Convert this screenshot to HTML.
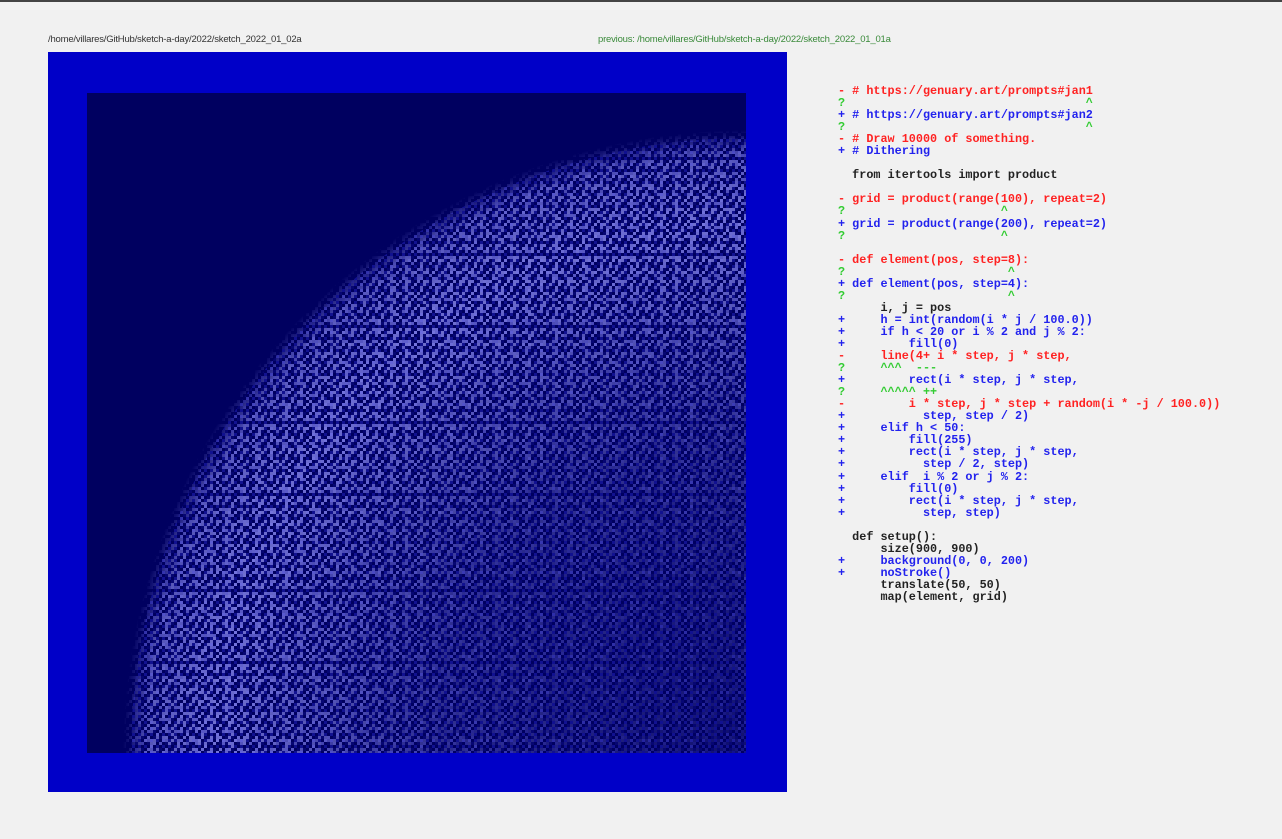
<!DOCTYPE html>
<html><head><style>
html,body{margin:0;padding:0;}
body{width:1282px;height:839px;background:#f1f1f1;position:relative;overflow:hidden;font-family:"Liberation Sans",sans-serif;}
#top{position:absolute;left:0;top:0;width:1282px;height:2px;background:#444;}
.h{position:absolute;top:34px;font-size:9.5px;color:#333;letter-spacing:-0.2px;}
pre{position:absolute;left:838px;top:85px;margin:0;font-family:"Liberation Mono",monospace;font-weight:bold;font-size:11.8px;line-height:12.05px;color:#222;}
.r{color:#f22}.b{color:#22e}.g{color:#3c3}
</style></head><body>
<div id="top"></div>
<div class="h" style="left:48px">/home/villares/GitHub/sketch-a-day/2022/sketch_2022_01_02a</div>
<div class="h" style="left:598px;color:#3a8a3a">previous: /home/villares/GitHub/sketch-a-day/2022/sketch_2022_01_01a</div>
<svg style="position:absolute;left:48px;top:52px" width="739" height="740">
<defs>
<pattern id="p1" width="9" height="12" patternUnits="userSpaceOnUse">
<rect x="0" y="0" width="3" height="3" fill="#9a9aff"/>
<rect x="3" y="6" width="3" height="3" fill="#8080f0"/>
<rect x="6" y="3" width="3" height="3" fill="#a0a0ff"/>
</pattern>
<pattern id="p2" width="15" height="21" patternUnits="userSpaceOnUse">
<rect x="3" y="9" width="3" height="3" fill="#9a9aff"/>
<rect x="9" y="15" width="6" height="3" fill="#8888f8"/>
<rect x="12" y="3" width="3" height="6" fill="#9090ff"/>
<rect x="0" y="18" width="3" height="3" fill="#a0a0ff"/>
</pattern>
<pattern id="p3" width="27" height="24" patternUnits="userSpaceOnUse">
<rect x="6" y="12" width="3" height="3" fill="#9a9aff"/>
<rect x="18" y="6" width="6" height="3" fill="#8080f0"/>
<rect x="21" y="18" width="3" height="6" fill="#9a9aff"/>
</pattern>
<pattern id="q" width="6" height="6" patternUnits="userSpaceOnUse">
<rect x="0" y="3" width="3" height="3" fill="#1c1cb0"/>
<rect x="3" y="0" width="3" height="3" fill="#0a0a80"/>
</pattern>
<radialGradient id="m" cx="698" cy="701" r="623" gradientUnits="userSpaceOnUse">
<stop offset="0" stop-color="#fff" stop-opacity="0.1"/>
<stop offset="0.5" stop-color="#fff" stop-opacity="0.3"/>
<stop offset="0.85" stop-color="#fff" stop-opacity="0.7"/>
<stop offset="0.96" stop-color="#fff" stop-opacity="0.55"/>
<stop offset="1" stop-color="#fff" stop-opacity="0"/>
</radialGradient>
<mask id="mk"><rect x="0" y="0" width="739" height="740" fill="url(#m)"/></mask>
<clipPath id="c"><rect x="39" y="41" width="659" height="660"/></clipPath>
</defs>
<rect width="739" height="740" fill="#0000c8"/>
<rect x="39" y="41" width="659" height="660" fill="#000060"/>
<g clip-path="url(#c)">
<circle cx="698" cy="701" r="615" fill="url(#q)" opacity="0.6"/>
<g mask="url(#mk)">
<rect width="739" height="740" fill="url(#p1)"/>
<rect width="739" height="740" fill="url(#p2)"/>
<rect width="739" height="740" fill="url(#p3)"/>
</g>
</g>
</svg>
<pre><span class="r">- # https://genuary.art/prompts#jan1</span>
<span class="g">?                                  ^</span>
<span class="b">+ # https://genuary.art/prompts#jan2</span>
<span class="g">?                                  ^</span>
<span class="r">- # Draw 10000 of something.</span>
<span class="b">+ # Dithering</span>

  from itertools import product

<span class="r">- grid = product(range(100), repeat=2)</span>
<span class="g">?                      ^</span>
<span class="b">+ grid = product(range(200), repeat=2)</span>
<span class="g">?                      ^</span>

<span class="r">- def element(pos, step=8):</span>
<span class="g">?                       ^</span>
<span class="b">+ def element(pos, step=4):</span>
<span class="g">?                       ^</span>
      i, j = pos
<span class="b">+     h = int(random(i * j / 100.0))</span>
<span class="b">+     if h &lt; 20 or i % 2 and j % 2:</span>
<span class="b">+         fill(0)</span>
<span class="r">-     line(4+ i * step, j * step,</span>
<span class="g">?     ^^^  ---</span>
<span class="b">+         rect(i * step, j * step,</span>
<span class="g">?     ^^^^^ ++</span>
<span class="r">-         i * step, j * step + random(i * -j / 100.0))</span>
<span class="b">+           step, step / 2)</span>
<span class="b">+     elif h &lt; 50:</span>
<span class="b">+         fill(255)</span>
<span class="b">+         rect(i * step, j * step,</span>
<span class="b">+           step / 2, step)</span>
<span class="b">+     elif  i % 2 or j % 2:</span>
<span class="b">+         fill(0)</span>
<span class="b">+         rect(i * step, j * step,</span>
<span class="b">+           step, step)</span>

  def setup():
      size(900, 900)
<span class="b">+     background(0, 0, 200)</span>
<span class="b">+     noStroke()</span>
      translate(50, 50)
      map(element, grid)</pre>
</body></html>
